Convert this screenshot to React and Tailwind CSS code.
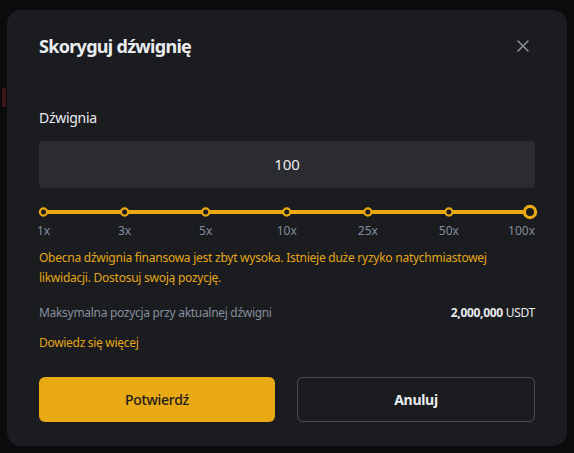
import React from "react";

const marks = ["1x", "3x", "5x", "10x", "25x", "50x", "100x"];

export default function App() {
  const w = 496;
  const start = 4.5;
  const end = 491;
  const step = (end - start) / 6;
  return (
    <div
      className="w-[574px] h-[453px] bg-[#0b0b0d] pt-[10px] flex overflow-hidden"
      style={{ fontFamily: '"Noto Sans", "Liberation Sans", sans-serif' }}
    >
      <div className="w-[7px] shrink-0">
        <div className="mt-[78px] ml-[2px] w-[4px] h-[19px] bg-[#3a1419]" />
      </div>
      <div className="w-[560px] h-[436px] shrink-0 bg-[#1b1c20] rounded-[14px] px-[32px] pt-[24px]">
        <div className="flex items-center justify-between h-[24px]">
          <h1 className="text-[18px] font-bold text-[#eaecef] tracking-[-0.7px]">Skoryguj dźwignię</h1>
          <svg width="12" height="12" viewBox="0 0 12 12" className="mr-[6px]">
            <path d="M1 1 L11 11 M11 1 L1 11" stroke="#8f939b" strokeWidth="1.5" strokeLinecap="round" />
          </svg>
        </div>
        <div className="mt-[50px] text-[14px] text-[#eaecef] leading-[20px] tracking-[-0.3px]">Dźwignia</div>
        <div className="mt-[13px] h-[47px] rounded-[4px] bg-[#2a2c31] flex items-center justify-center text-[15px] text-[#eaecef]">
          100
        </div>
        <div className="mt-[15px]">
          <svg width={w} height="18" viewBox={`0 0 ${w} 18`} className="block overflow-visible">
            <line x1={start} y1="9" x2={end} y2="9" stroke="#e9a912" strokeWidth="4" />
            {marks.map((m, i) => {
              const cx = start + i * step;
              const last = i === marks.length - 1;
              return (
                <circle
                  key={m}
                  cx={cx}
                  cy="9"
                  r={last ? 5.6 : 3.6}
                  fill="#1b1c20"
                  stroke="#e9a912"
                  strokeWidth={last ? 3.2 : 2.2}
                />
              );
            })}
          </svg>
          <div className="relative h-[18px] mt-[1px] text-[12px] text-[#848e9c]">
            {marks.map((m, i) => {
              const last = i === marks.length - 1;
              return last ? (
                <span key={m} className="absolute top-0 right-0 leading-[18px]">
                  {m}
                </span>
              ) : (
                <span
                  key={m}
                  className="absolute top-0 -translate-x-1/2 leading-[18px]"
                  style={{ left: start + i * step }}
                >
                  {m}
                </span>
              );
            })}
          </div>
        </div>
        <p className="mt-[8px] text-[12px] leading-[20px] text-[#e3a617] tracking-[-0.25px]">
          Obecna dźwignia finansowa jest zbyt wysoka. Istnieje duże ryzyko natychmiastowej likwidacji. Dostosuj swoją pozycję.
        </p>
        <div className="mt-[15px] flex items-center justify-between text-[12px] leading-[20px] tracking-[-0.3px]">
          <span className="text-[#848e9c]">Maksymalna pozycja przy aktualnej dźwigni</span>
          <span className="text-[#eaecef]">
            <span className="font-bold">2,000,000</span> USDT
          </span>
        </div>
        <div className="mt-[10px] text-[12px] leading-[20px] text-[#e3a617] tracking-[-0.3px]">Dowiedz się więcej</div>
        <div className="mt-[24px] flex gap-[22px]">
          <button className="flex-1 h-[45px] rounded-[6px] bg-[#e9a912] text-[14px] font-medium text-[#1b1c20] tracking-[-0.3px]">
            Potwierdź
          </button>
          <button className="flex-1 h-[45px] rounded-[6px] border border-[#4a4d55] text-[14px] font-bold text-[#eaecef] tracking-[-0.3px]">
            Anuluj
          </button>
        </div>
      </div>
    </div>
  );
}
